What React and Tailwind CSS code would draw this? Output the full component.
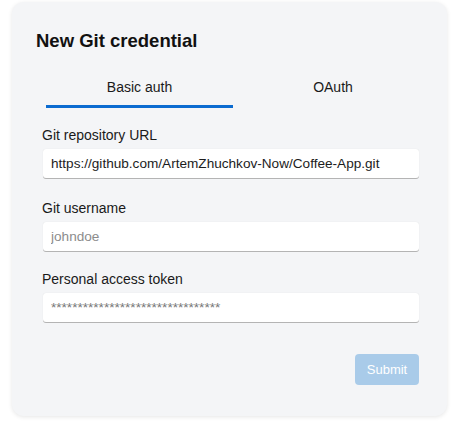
import { useState } from "react";

const fieldClass =
  "mt-[4px] ml-px block w-[376px] h-[29px] rounded-[3px] bg-white px-[8px] text-[13.6px] text-[#1c1c1c] shadow-[0_1px_0_#b4b4b4,0_0_1px_rgba(0,0,0,0.12)] outline-none placeholder:text-[#8c8c8c]";

export default function App() {
  const [tab, setTab] = useState("basic");

  return (
    <div className="min-h-screen bg-white pt-[2px] pl-[12px]" style={{ fontFamily: "'Liberation Sans', Arial, sans-serif" }}>
      <div className="w-[435px] rounded-[12px] bg-[#f4f5f7] pl-[24px] pr-[24px] pt-[27px] pb-[31px] shadow-[0_1px_4px_rgba(0,0,0,0.10)]">
        <h1 className="text-[18.5px] leading-6 font-bold text-[#111]">New Git credential</h1>

        <div className="mt-[24px] ml-[10px] -mr-[10px] flex">
          <button onClick={() => setTab("basic")} className="w-[187px] shrink-0 flex flex-col items-center">
            <span className="text-[14px] leading-5 text-[#1a1a1a]">Basic auth</span>
            <span className={"mt-[8px] h-[3px] w-full " + (tab === "basic" ? "bg-[#0b6bd0]" : "bg-transparent")} />
          </button>
          <button onClick={() => setTab("oauth")} className="w-[200px] shrink-0 flex flex-col items-center">
            <span className="text-[14px] leading-5 text-[#1a1a1a]">OAuth</span>
            <span className={"mt-[8px] h-[3px] w-full " + (tab === "oauth" ? "bg-[#0b6bd0]" : "bg-transparent")} />
          </button>
        </div>

        <div className="ml-[6px]">
          <label className="mt-[17px] block">
            <span className="block text-[14px] leading-5 text-[#1a1a1a]">Git repository URL</span>
            <input readOnly className={fieldClass} value="https://github.com/ArtemZhuchkov-Now/Coffee-App.git" />
          </label>

          <label className="mt-[20px] block">
            <span className="block text-[14px] leading-5 text-[#1a1a1a]">Git username</span>
            <input className={fieldClass} placeholder="johndoe" />
          </label>

          <label className="mt-[18px] block">
            <span className="block text-[14px] leading-5 text-[#1a1a1a]">Personal access token</span>
            <input className={fieldClass + " text-[12px] placeholder:text-[#777]"} placeholder="********************************" />
          </label>

          <div className="mt-[32px] flex justify-end pr-[4px]">
            <button disabled className="h-[31px] w-[64px] rounded-[4px] bg-[#a9cbe9] text-[13px] text-white">
              Submit
            </button>
          </div>
        </div>
      </div>
    </div>
  );
}
